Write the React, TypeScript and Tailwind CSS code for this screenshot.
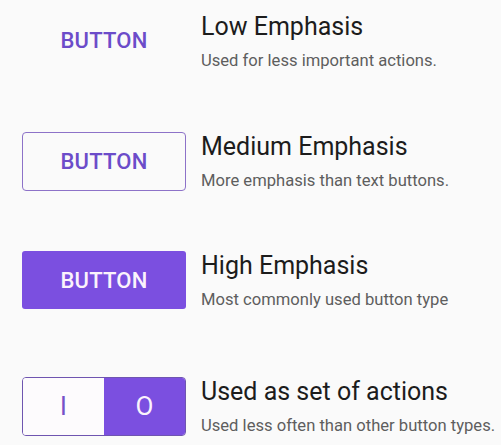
import React from "react";

const PURPLE = "bg-[#7b4fe0]";

function TextBlock({ title, sub }: { title: string; sub: string }) {
  return (
    <div className="flex flex-col">
      <div className="text-[25px] leading-[30px] text-[#1c1c1c] whitespace-nowrap">{title}</div>
      <div className="mt-[7px] text-[16.6px] leading-[24px] text-[#5e5e5e] whitespace-nowrap">{sub}</div>
    </div>
  );
}

export default function App() {
  return (
    <div
      className="w-[501px] h-[445px] bg-[#fafafa] flex flex-col pt-[12px] pl-[22px] overflow-hidden"
      style={{ fontFamily: "Roboto, 'Liberation Sans', sans-serif" }}
    >
      <div className="flex items-start gap-[15px]">
        <div className="w-[164px] h-[57px] flex items-center justify-center text-[22px] font-medium tracking-[0.2px] text-[#6c4cc9]">
          BUTTON
        </div>
        <TextBlock title="Low Emphasis" sub="Used for less important actions." />
      </div>

      <div className="flex items-start gap-[15px] mt-[59px]">
        <div className="w-[164px] h-[59px] flex items-center justify-center text-[22px] font-medium tracking-[0.2px] text-[#6c4cc9] border border-[#8d72c8] rounded-[4px]">
          BUTTON
        </div>
        <TextBlock title="Medium Emphasis" sub="More emphasis than text buttons." />
      </div>

      <div className="flex items-start gap-[15px] mt-[58px]">
        <div className={`w-[164px] h-[58px] flex items-center justify-center text-[22px] font-medium tracking-[0.2px] text-[#fbf3fc] rounded-[3px] ${PURPLE}`}>
          BUTTON
        </div>
        <TextBlock title="High Emphasis" sub="Most commonly used button type" />
      </div>

      <div className="flex items-start gap-[15px] mt-[65px]">
        <div className="w-[164px] h-[59px] flex rounded-[4px] border border-[#6f55b0] overflow-hidden">
          <div className="flex-1 flex items-center justify-center bg-[#fdfbfd] text-[25px] text-[#7552c8]">I</div>
          <div className={`flex-1 flex items-center justify-center text-[26px] text-[#fbf3fc] ${PURPLE}`}>O</div>
        </div>
        <TextBlock title="Used as set of actions" sub="Used less often than other button types." />
      </div>
    </div>
  );
}
